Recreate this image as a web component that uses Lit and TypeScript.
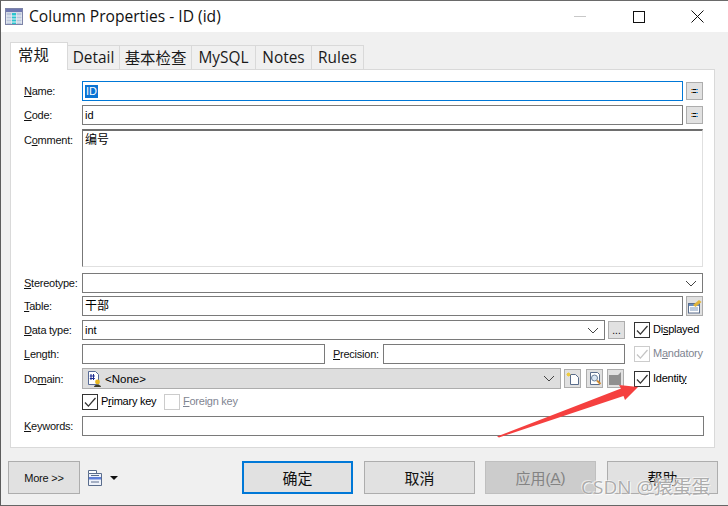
import { LitElement, html, css, svg } from "lit";
import { customElement } from "lit/decorators.js";

const chev = html`<svg class="chev" width="12" height="7" viewBox="0 0 12 7"><path d="M1 1l5 5 5-5" fill="none" stroke="#444" stroke-width="1"/></svg>`;
const tick = (c: string) => html`<svg width="14" height="14" viewBox="0 0 14 14"><path d="M2 7.5l3.4 3.6L12.5 3" fill="none" stroke="${c}" stroke-width="1.3"/></svg>`;

@customElement("app-root")
export class AppRoot extends LitElement {
  static styles = css`
    :host { display: block; width: 728px; height: 506px; position: relative; overflow: hidden;
      font-family: "Liberation Sans", "Noto Sans CJK SC", sans-serif; font-size: 11px; color: #000; }
    * { box-sizing: border-box; }
    .win { width: 728px; height: 506px; background: #f0f0f0; display: flex; flex-direction: column;
      border-left: 1px solid #5c5c5c; border-top: 1px solid #6a6a6a; border-bottom: 1px solid #666; }
    .title { height: 31px; background: #fff; display: flex; align-items: center; padding-left: 4px; flex: none; }
    .title .t { font: 15.6px "Open Sans", sans-serif; margin-left: 6px; color: #111; position: relative; top: -1px; }
    .caps { margin-left: auto; display: flex; margin-right: 1px; }
    .cap { width: 59px; height: 31px; display: flex; align-items: center; justify-content: center; }
    .body { flex: 1; padding: 10px 12px 0 9px; display: flex; flex-direction: column; }
    .tabs { display: flex; align-items: flex-end; height: 27px; font: 15.4px "Open Sans", "Noto Sans CJK SC", sans-serif; position: relative; z-index: 1; color: #1a1a1a; }
    .tab { height: 24px; background: #f0f0f0; border: 1px solid #d9d9d9; border-left: none; border-bottom: none;
      display: flex; align-items: center; justify-content: center; padding-bottom: 1px; }
    .tab.on { height: 28px; background: #fff; border-left: 1px solid #d9d9d9; margin-bottom: -1px; padding-bottom: 4px; justify-content: flex-start; padding-left: 7px; }
    .panel { width: 705px; height: 379px; background: #fff; border: 1px solid #d9d9d9; padding: 11px 11px 0 13px; display: flex; flex-direction: column; }
    .row { display: flex; align-items: center; height: 20px; flex: none; }
    .lab { width: 58px; flex: none; white-space: nowrap; letter-spacing: -0.25px; color: #111; }
    .in { height: 100%; border: 1px solid #7a7a7a; background: #fff; display: flex; align-items: center; padding-left: 2px; flex: 1; min-width: 0; font-size: 11px; position: relative; }
    .in.focus { border-color: #0078d7; }
    .sel { background: #0a74d4; color: #fff; padding: 0 1px; line-height: 13px; }
    .cjk { font-size: 12px; line-height: 14px; }
    .chev { margin-left: auto; margin-right: 5px; }
    .eq { width: 17px; height: 18px; margin-left: 3px; background: #e1e1e1; border: 1px solid #adadad; display: flex; align-items: center; justify-content: center; flex: none; }
    .gap4 { margin-top: 4px; } .gap3 { margin-top: 3px; } .gap6 { margin-top: 6px; }
    .area { height: 138px; align-items: flex-start; }
    .area .in { border-top: 2px solid #6e6e6e; border-left: 1px solid #777; border-right: 1px solid #e0e0e0; border-bottom: 1px solid #e0e0e0; align-items: flex-start; padding-top: 2px; }
    .area .lab { margin-top: 5px; }
    .chk { width: 16px; height: 16px; border: 1px solid #333; background: #fff; display: flex; align-items: center; justify-content: center; flex: none; }
    .chk.off { border-color: #ccc; }
    .ctext { margin-left: 3px; white-space: nowrap; letter-spacing: -0.25px; position: relative; top: -1px; }
    .dis { color: #7f8591; }
    .cg { width: 69px; margin-left: 9px; display: flex; align-items: center; flex: none; }
    .small { width: 17px; height: 18px; background: #e1e1e1; border: 1px solid #adadad; display: flex; align-items: center; justify-content: center; flex: none; margin-left: 3px; }
    .tool { height: 19px; }
    .keys { height: 16px; margin-top: 5px; padding-left: 58px; }
    .dom { background: #dedede; border-color: #adadad; }
    .foot { display: flex; align-items: center; height: 33px; margin-top: 13px; margin-left: -2px; margin-right: -3px; }
    .btn { width: 111px; height: 33px; background: #e1e1e1; border: 1px solid #adadad; display: flex; align-items: center; justify-content: center; font-size: 15px; flex: none; color: #111; }
    .btn.def { border: 2px solid #0078d7; }
    .btn.off { background: #ccc; color: #838383; border-color: #bfbfbf; }
    .more { width: 72px; font-size: 11px; letter-spacing: -0.2px; }
    .mi { margin-left: 8px; display: flex; align-items: center; }
    .tri { width: 0; height: 0; border: 4px solid transparent; border-top: 4px solid #111; border-bottom: none; margin-left: 8px; }
    .over { position: absolute; left: 0; top: 0; pointer-events: none; }
    .mark { position: absolute; left: 581px; top: 472px; font: 19px "Open Sans", "Noto Sans CJK SC", sans-serif; color: rgba(150,150,150,.8); text-shadow: 0 0 1px #fff, 1px 1px 0 rgba(255,255,255,.8), -1px -1px 0 rgba(255,255,255,.5); white-space: nowrap; }
  `;

  eq() {
    return html`<div class="eq"><svg width="7" height="5" viewBox="0 0 7 5"><path d="M0 .5h1.5" stroke="#e98a1e"/><path d="M1.5 .5h3.5" stroke="#111"/><path d="M5 .5h2" stroke="#2b8fe0"/><path d="M0 3.5h1.5" stroke="#e98a1e"/><path d="M1.5 3.5h3.5" stroke="#111"/><path d="M5 3.5h2" stroke="#2b8fe0"/></svg></div>`;
  }

  render() {
    return html`
      <div class="win">
        <div class="title">
          <svg width="18" height="17" viewBox="0 0 18 17">
            <rect x=".5" y=".5" width="17" height="16" fill="#d6dbe6" stroke="#7d84a8"/>
            <rect x="1" y="1" width="16" height="3" fill="#6f78b0"/>
            <path d="M2 5h4v11H2zM12 5h4v11h-4z" fill="#b9c6dc"/>
            <rect x="7" y="5" width="4" height="11" fill="#2ac4cf"/>
            <path d="M1 8h16M1 11h16M1 14h16" stroke="#eef2f6" stroke-width="1"/>
          </svg>
          <span class="t">Column Properties - ID (id)</span>
          <div class="caps">
            <div class="cap"><svg width="12" height="2"><rect width="12" height="1" fill="#c8c8c8"/></svg></div>
            <div class="cap"><svg width="12" height="12" viewBox="0 0 12 12"><rect x=".5" y=".5" width="11" height="11" fill="none" stroke="#111"/></svg></div>
            <div class="cap"><svg width="13" height="13" viewBox="0 0 13 13"><path d="M.5.5l12 12M12.5.5l-12 12" stroke="#111" stroke-width="1"/></svg></div>
          </div>
        </div>
        <div class="body">
          <div class="tabs">
            <div class="tab on" style="width:58px">常规</div>
            <div class="tab" style="width:52px">Detail</div>
            <div class="tab" style="width:72px">基本检查</div>
            <div class="tab" style="width:64px">MySQL</div>
            <div class="tab" style="width:56px">Notes</div>
            <div class="tab" style="width:52px">Rules</div>
          </div>
          <div class="panel">
            <div class="row"><span class="lab"><u>N</u>ame:</span><div class="in focus"><span class="sel">ID</span></div>${this.eq()}</div>
            <div class="row gap4"><span class="lab"><u>C</u>ode:</span><div class="in">id</div>${this.eq()}</div>
            <div class="row area gap4"><span class="lab">C<u>o</u>mment:</span><div class="in cjk">编号</div></div>
            <div class="row gap6"><span class="lab"><u>S</u>tereotype:</span><div class="in">${chev}</div></div>
            <div class="row gap3"><span class="lab"><u>T</u>able:</span><div class="in cjk">干部</div>
              <div class="eq" style="height:20px;width:17px">
                <svg width="15" height="15" viewBox="0 0 15 15"><rect x="1.5" y="4.5" width="11" height="9.5" fill="#fff" stroke="#5a6d8c"/><rect x="2" y="5" width="10" height="2" fill="#6a8fc0"/><path d="M3 9h8M3 11h8" stroke="#7a95b8"/><path d="M6 6l6-5 2.5 2-6 5z" fill="#e0b43a"/></svg>
              </div>
            </div>
            <div class="row gap4"><span class="lab"><u>D</u>ata type:</span><div class="in">int${chev}</div>
              <div class="small" style="font-size:10px">...</div>
              <div class="cg"><div class="chk">${tick("#333")}</div><span class="ctext">Di<u>s</u>played</span></div>
            </div>
            <div class="row gap4"><span class="lab"><u>L</u>ength:</span><div class="in" style="flex:none;width:243px"></div>
              <span class="lab" style="width:50px;margin-left:8px"><u>P</u>recision:</span><div class="in"></div>
              <div class="cg"><div class="chk off">${tick("#c4c4c4")}</div><span class="ctext dis">M<u>a</u>ndatory</span></div>
            </div>
            <div class="row gap4" style="height:21px"><span class="lab">Do<u>m</u>ain:</span>
              <div class="in dom" style="padding-left:3px">
                <svg width="16" height="16" viewBox="0 0 16 16"><path d="M2.5.5h7l3 3v10h-10z" fill="#fff" stroke="#566a96"/><path d="M5 3v6M7.5 3v6M3.8 5h5M3.8 7.5h5" stroke="#1a2a90" stroke-width="1"/><circle cx="11.5" cy="11" r="2.4" fill="#e8b820"/><path d="M8 16c0-3 7-3 7 0z" fill="#3c3c2a"/></svg>
                <span style="margin-left:3px;font-size:11.5px">&lt;None&gt;</span>${chev}
              </div>
              <div class="small tool"><svg width="14" height="14" viewBox="0 0 14 14"><path d="M4.5 2.5h5l3 3v7h-8z" fill="#fff" stroke="#5a6d8c"/><path d="M1 1l3 3M4 1L1 4M2.5.5v4M.5 2.5h4" stroke="#f0cc40"/></svg></div>
              <div class="small tool" style="margin-left:5px"><svg width="14" height="14" viewBox="0 0 14 14"><path d="M2.5 .5h7l2 2v10h-9z" fill="#fff" stroke="#5a6d8c"/><circle cx="6.5" cy="6" r="3" fill="#dbe8f5" stroke="#6b7f9a"/><path d="M9 8.5l3.5 3.5" stroke="#d08a30" stroke-width="2"/></svg></div>
              <div class="small tool" style="margin-left:4px;margin-right:1px"><svg width="13" height="13" viewBox="0 0 13 13"><path d="M0 3h9l3-3v13H0z" fill="#8f8f8f"/></svg></div>
              <div class="cg"><div class="chk">${tick("#333")}</div><span class="ctext">Identit<u>y</u></span></div>
            </div>
            <div class="row keys">
              <div class="chk">${tick("#333")}</div><span class="ctext" style="width:63px;margin-right:0">P<u>r</u>imary key</span>
              <div class="chk off"></div><span class="ctext dis"><u>F</u>oreign key</span>
            </div>
            <div class="row" style="margin-top:6px;margin-right:-1px"><span class="lab"><u>K</u>eywords:</span><div class="in"></div></div>
          </div>
          <div class="foot">
            <div class="btn more">More &gt;&gt;</div>
            <div class="mi">
              <svg width="14" height="16" viewBox="0 0 14 16"><path d="M.5.5h8v3h-8z" fill="#fff" stroke="#5a6d8c"/><path d="M.5 3.5h13v12H.5z" fill="#eef2fa" stroke="#5a6d8c"/><path d="M1 7h12v2.5H1z" fill="#5f7fd8"/><path d="M3 5.5h8M3 12h8" stroke="#5a6d8c"/></svg>
              <div class="tri"></div>
            </div>
            <div class="btn def" style="margin-left:124px">确定</div>
            <div class="btn" style="margin-left:11px">取消</div>
            <div class="btn off" style="margin-left:10px">应用(<u>A</u>)</div>
            <div class="btn" style="margin-left:11px">帮助</div>
          </div>
        </div>
      </div>
      <svg class="over" width="728" height="506" viewBox="0 0 728 506">
        ${svg`<polygon points="497,436.5 621,388.5 619,385 638,387 625,400 623.5,396 499,437.5" fill="#f5403f"/>`}
      </svg>
      <div class="mark">CSDN @猿蛋蛋</div>
    `;
  }
}
